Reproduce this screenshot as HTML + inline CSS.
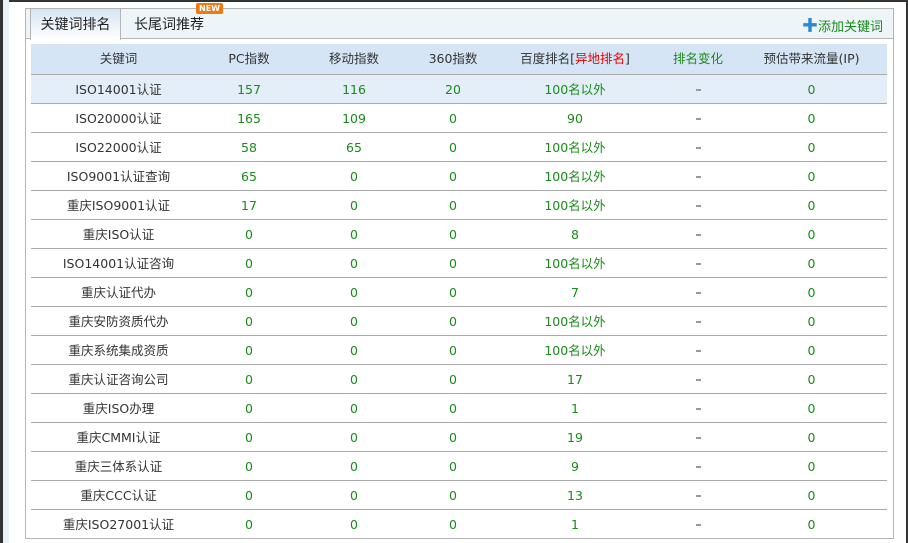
<!DOCTYPE html>
<html><head><meta charset="utf-8"><style>
*{margin:0;padding:0;box-sizing:border-box}
body{width:908px;height:543px;background:#fff;position:relative;overflow:hidden;font-family:"DejaVu Sans","Noto Sans CJK SC",sans-serif;font-size:12.5px;color:#333}
.lb{position:absolute;left:0;top:0;width:3px;height:543px;background:#333}
.lb2{position:absolute;left:3px;top:0;width:6px;height:543px;background:#eaf2f8}
.tb{position:absolute;left:0;top:0;width:908px;height:2px;background:#333}
.rb{position:absolute;right:0;top:0;width:2px;height:543px;background:#333}
.panel{position:absolute;left:25px;top:8px;width:869px;height:531px;border:1px solid #b5b5b5;background:#fff}
.head{position:absolute;left:0;top:0;width:867px;height:30px;background:#eef5f9;border-bottom:1px solid #b5b5b5}
.tab1{position:absolute;left:4px;top:0;width:91px;height:31px;background:linear-gradient(#d5e5f3,#fff);border-left:1px solid #b5b5b5;border-right:1px solid #b5b5b5;text-align:center;line-height:30px;font-size:14px;color:#222;font-family:"Noto Sans CJK SC",sans-serif}
.tab2{position:absolute;left:108px;top:0;line-height:30px;font-size:14px;color:#222;font-family:"Noto Sans CJK SC",sans-serif}
.new{position:absolute;left:170px;top:-6px;background:#f07a10;color:#fff;font-size:8px;font-weight:bold;padding:0 3px;line-height:11px;border-radius:2px}
.add{position:absolute;right:10px;top:0;line-height:30px;color:#1a8a1a;font-size:13px;font-family:"Noto Sans CJK SC",sans-serif}
.add b{color:#2a8ad0;font-size:16px}
table{position:absolute;left:5px;top:35px;width:856px;border-collapse:collapse}
td,th{height:29px;text-align:center;border-bottom:1px solid #aaa;font-weight:normal;color:#1a8a1a;font-size:12.5px;line-height:16px;padding-top:2px}
th{height:30px;background:#d5e5f5;color:#333;padding-top:0}
td:first-child{color:#333}
td.d{color:#888}
td.d i{display:inline-block;width:5px;height:2px;background:#999;vertical-align:middle}
tr.h td{background:#e4eef8}
</style></head><body>
<div class="tb"></div><div class="lb"></div><div class="lb2"></div><div class="rb"></div>
<div class="panel">
<div class="head"><div class="tab1">关键词排名</div><div class="tab2">长尾词推荐</div><div class="new">NEW</div><div class="add"><b>✚</b>添加关键词</div></div>
<table>
<colgroup><col style="width:175px"><col style="width:86px"><col style="width:124px"><col style="width:74px"><col style="width:170px"><col style="width:76px"><col style="width:151px"></colgroup>
<tr><th>关键词</th><th>PC指数</th><th>移动指数</th><th>360指数</th><th>百度排名[<span style="color:#e00">异地排名</span>]</th><th style="color:#1a8a1a">排名变化</th><th>预估带来流量(IP)</th></tr>
<tr class="h"><td>ISO14001认证</td><td>157</td><td>116</td><td>20</td><td>100名以外</td><td class="d"><i></i></td><td>0</td></tr>
<tr><td>ISO20000认证</td><td>165</td><td>109</td><td>0</td><td>90</td><td class="d"><i></i></td><td>0</td></tr>
<tr><td>ISO22000认证</td><td>58</td><td>65</td><td>0</td><td>100名以外</td><td class="d"><i></i></td><td>0</td></tr>
<tr><td>ISO9001认证查询</td><td>65</td><td>0</td><td>0</td><td>100名以外</td><td class="d"><i></i></td><td>0</td></tr>
<tr><td>重庆ISO9001认证</td><td>17</td><td>0</td><td>0</td><td>100名以外</td><td class="d"><i></i></td><td>0</td></tr>
<tr><td>重庆ISO认证</td><td>0</td><td>0</td><td>0</td><td>8</td><td class="d"><i></i></td><td>0</td></tr>
<tr><td>ISO14001认证咨询</td><td>0</td><td>0</td><td>0</td><td>100名以外</td><td class="d"><i></i></td><td>0</td></tr>
<tr><td>重庆认证代办</td><td>0</td><td>0</td><td>0</td><td>7</td><td class="d"><i></i></td><td>0</td></tr>
<tr><td>重庆安防资质代办</td><td>0</td><td>0</td><td>0</td><td>100名以外</td><td class="d"><i></i></td><td>0</td></tr>
<tr><td>重庆系统集成资质</td><td>0</td><td>0</td><td>0</td><td>100名以外</td><td class="d"><i></i></td><td>0</td></tr>
<tr><td>重庆认证咨询公司</td><td>0</td><td>0</td><td>0</td><td>17</td><td class="d"><i></i></td><td>0</td></tr>
<tr><td>重庆ISO办理</td><td>0</td><td>0</td><td>0</td><td>1</td><td class="d"><i></i></td><td>0</td></tr>
<tr><td>重庆CMMI认证</td><td>0</td><td>0</td><td>0</td><td>19</td><td class="d"><i></i></td><td>0</td></tr>
<tr><td>重庆三体系认证</td><td>0</td><td>0</td><td>0</td><td>9</td><td class="d"><i></i></td><td>0</td></tr>
<tr><td>重庆CCC认证</td><td>0</td><td>0</td><td>0</td><td>13</td><td class="d"><i></i></td><td>0</td></tr>
<tr><td style="border-bottom:none">重庆ISO27001认证</td><td style="border-bottom:none">0</td><td style="border-bottom:none">0</td><td style="border-bottom:none">0</td><td style="border-bottom:none">1</td><td class="d" style="border-bottom:none"><i></i></td><td style="border-bottom:none">0</td></tr>
</table>
</div>
</body></html>
